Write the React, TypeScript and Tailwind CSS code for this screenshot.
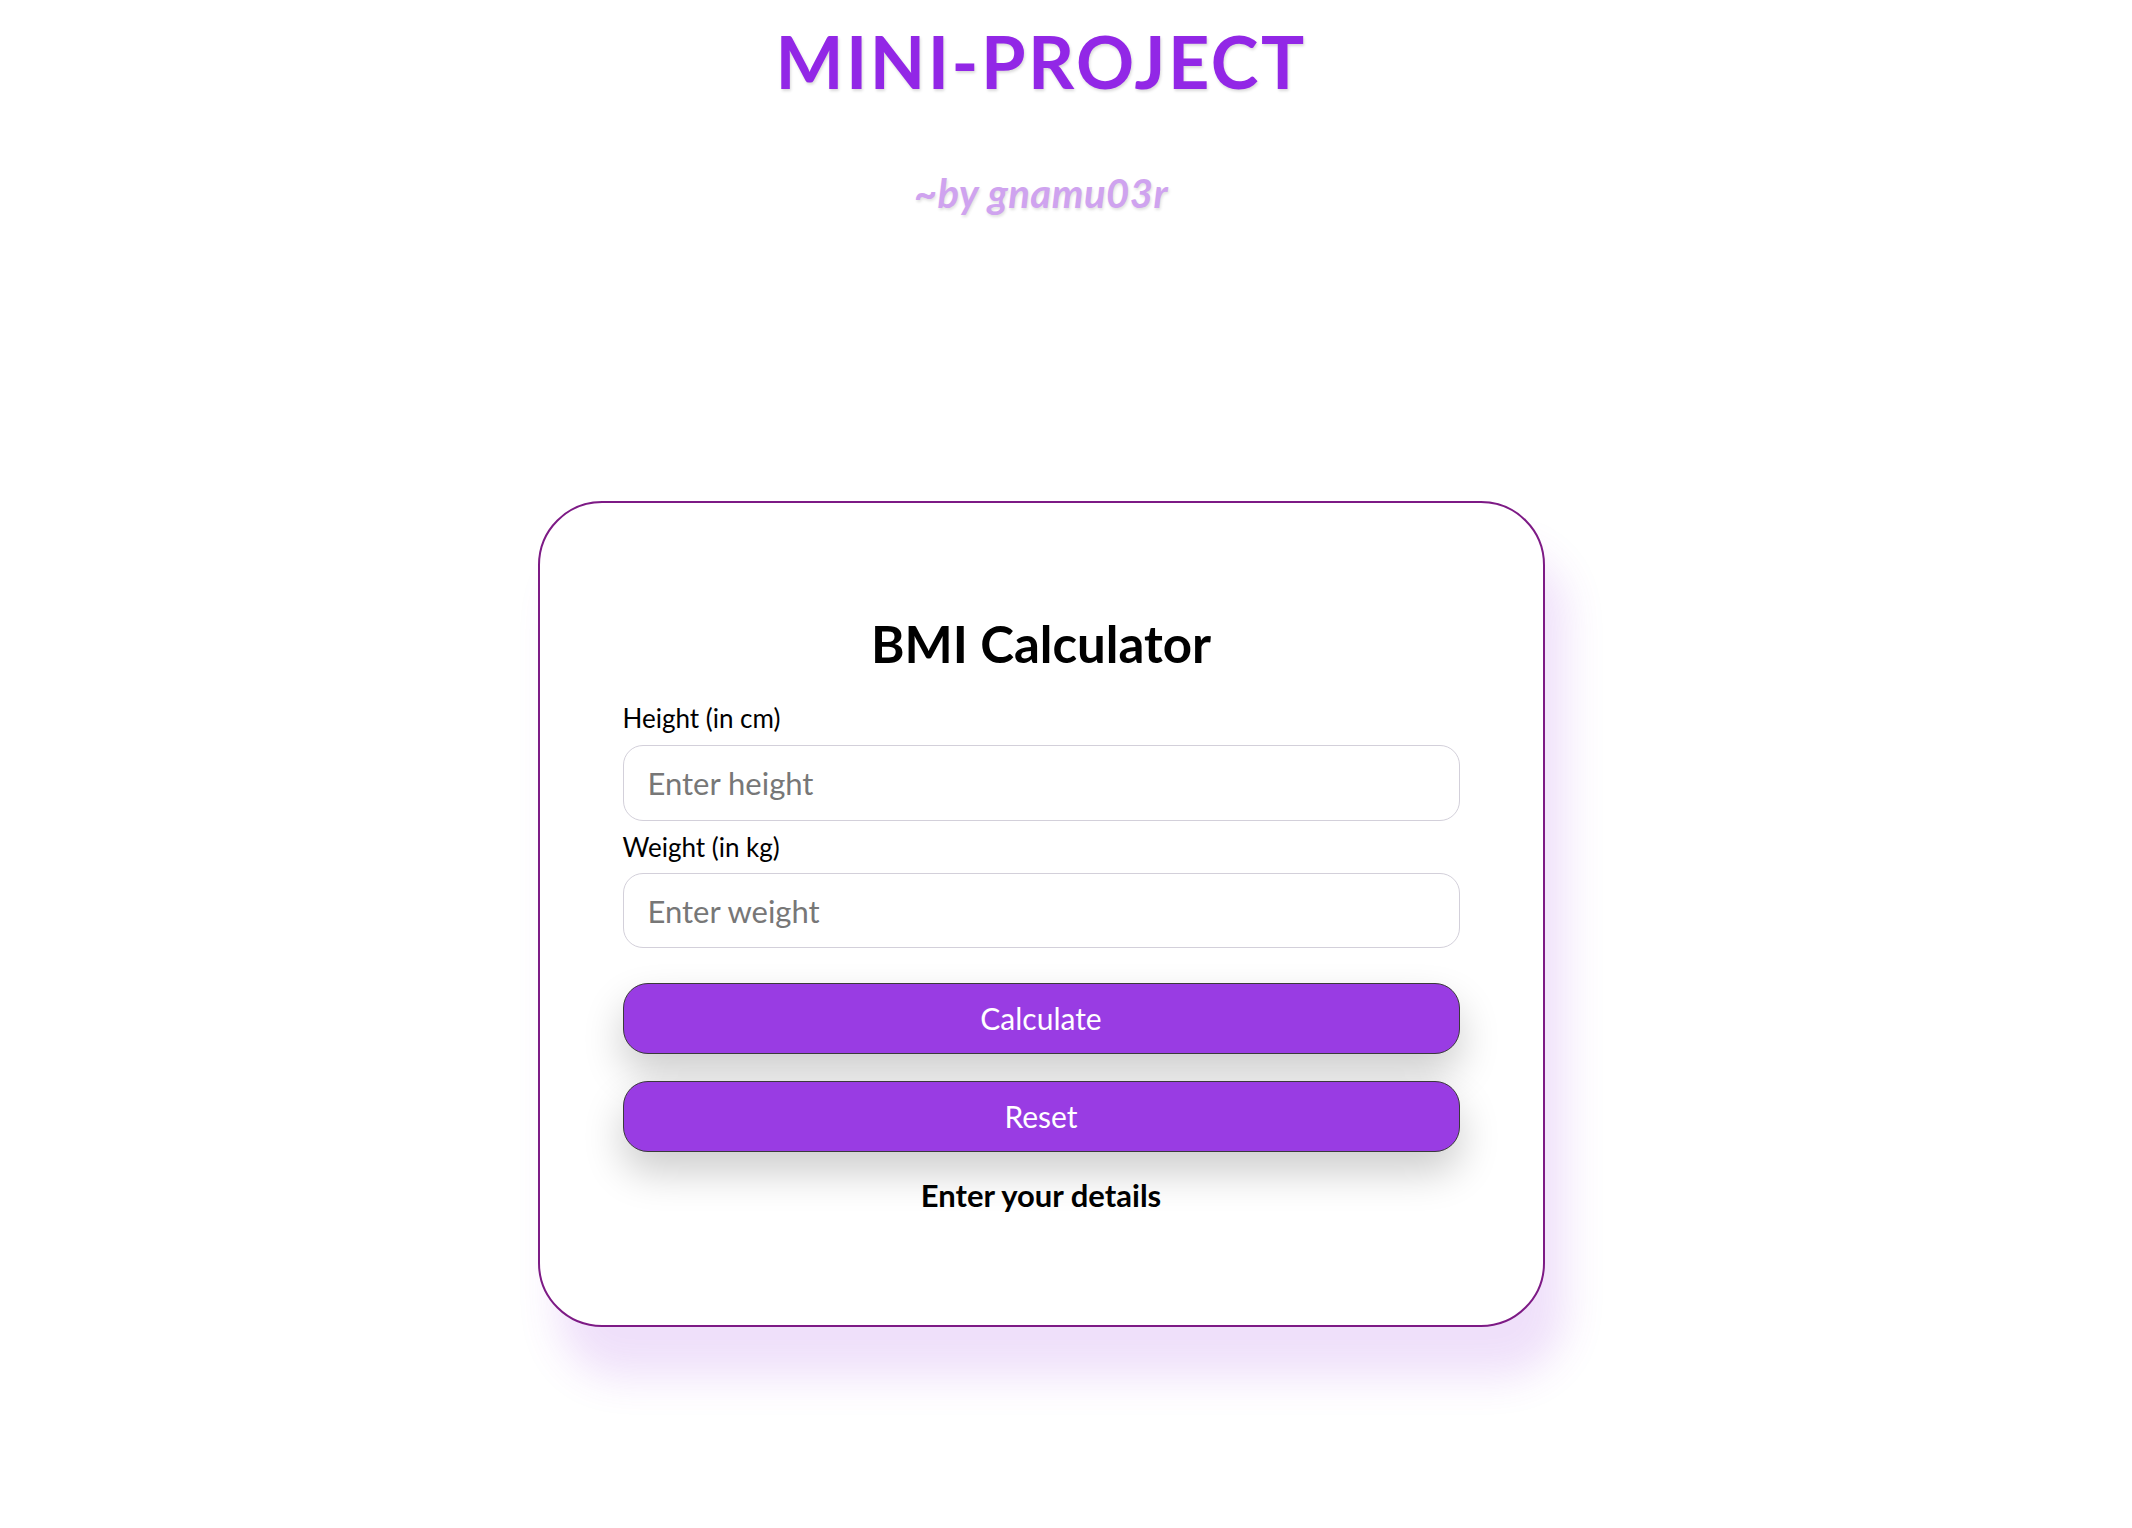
import { useState } from "react";

export default function App() {
  const [height, setHeight] = useState("");
  const [weight, setWeight] = useState("");
  const [message, setMessage] = useState("Enter your details");

  const calculate = () => {
    const h = parseFloat(height);
    const w = parseFloat(weight);
    if (!h || !w) {
      setMessage("Enter your details");
      return;
    }
    const bmi = w / ((h / 100) * (h / 100));
    setMessage("Your BMI is " + bmi.toFixed(1));
  };

  const reset = () => {
    setHeight("");
    setWeight("");
    setMessage("Enter your details");
  };

  return (
    <div className="min-h-screen w-full bg-white flex flex-col items-center pr-[50px] font-['Lato','Open_Sans',sans-serif]">
      <h1 className="mt-[25px] text-[72px] leading-[72px] tracking-[2.5px] font-bold text-[#9227e6] [text-shadow:1px_2px_3px_rgba(0,0,0,0.15)]">
        MINI-PROJECT
      </h1>
      <p className="mt-[76px] text-[40px] leading-[40px] tracking-[0.5px] font-bold italic text-[#cfa3ef] [text-shadow:1px_2px_3px_rgba(0,0,0,0.12)]">
        ~by gnamu03r
      </p>

      <div className="mt-[288px] w-[1007px] h-[826px] bg-white border-2 border-[#7d1a85] rounded-[64px] px-[83px] pt-[115px] flex flex-col shadow-[20px_50px_40px_rgba(153,60,227,0.16)]">
        <h2 className="text-center text-[51px] leading-[51px] font-bold text-black">
          BMI Calculator
        </h2>

        <label className="mt-[36px] text-[26px] leading-[26px] text-black">
          Height (in cm)
        </label>
        <input
          type="number"
          value={height}
          onChange={(e) => setHeight(e.target.value)}
          placeholder="Enter height"
          className="mt-[14px] h-[76px] w-full rounded-[20px] border border-[#d3d0da] px-[24px] text-[31px] text-black placeholder:text-[#777] outline-none"
        />

        <label className="mt-[13px] text-[26px] leading-[26px] text-black">
          Weight (in kg)
        </label>
        <input
          type="number"
          value={weight}
          onChange={(e) => setWeight(e.target.value)}
          placeholder="Enter weight"
          className="mt-[13px] h-[75px] w-full rounded-[20px] border border-[#d3d0da] px-[24px] text-[31px] text-black placeholder:text-[#777] outline-none"
        />

        <button
          onClick={calculate}
          className="mt-[35px] h-[71px] w-full rounded-[25px] border border-[#3a3a3a] bg-[#993ce3] text-white text-[30px] shadow-[0_20px_40px_rgba(0,0,0,0.2)]"
        >
          Calculate
        </button>
        <button
          onClick={reset}
          className="mt-[27px] h-[71px] w-full rounded-[25px] border border-[#3a3a3a] bg-[#993ce3] text-white text-[30px] shadow-[0_20px_40px_rgba(0,0,0,0.2)]"
        >
          Reset
        </button>

        <p className="mt-[28px] text-center text-[31px] leading-[31px] font-bold text-black">
          {message}
        </p>
      </div>
    </div>
  );
}
